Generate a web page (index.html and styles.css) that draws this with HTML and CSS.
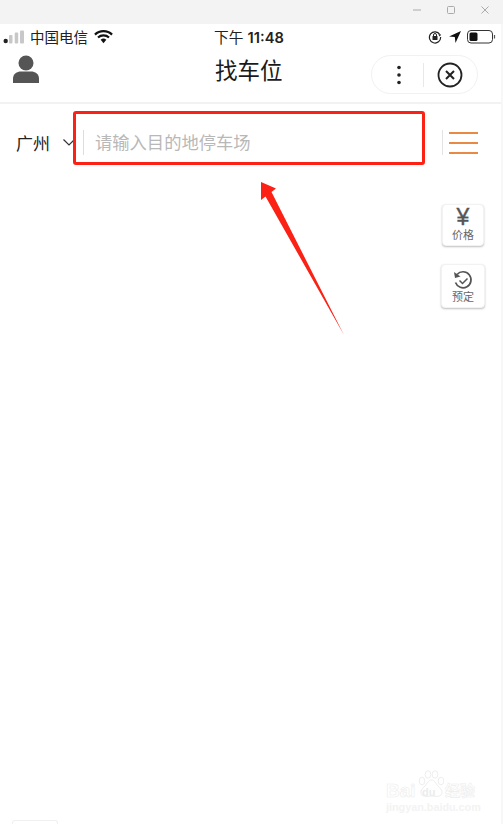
FILE: index.html
```html
<!DOCTYPE html>
<html lang="zh-CN">
<head>
    <meta charset="UTF-8">
    <meta name="viewport" content="width=device-width, initial-scale=1.0">
    <title>找车位</title>
    <link rel="stylesheet" href="styles.css">
</head>
<body>
    <div class="window">
        <div class="titlebar">
            <svg class="win-icon" viewBox="0 0 10 10"><path d="M1 5h8" stroke="#aaa" fill="none"/></svg>
            <svg class="win-icon" viewBox="0 0 10 10"><rect x="1.500" y="1.500" width="7" height="7" rx="1" stroke="#aaa" fill="none"/></svg>
            <svg class="win-icon" viewBox="0 0 10 10"><path d="M1.500 1.500l7 7M8.500 1.500l-7 7" stroke="#aaa" fill="none"/></svg>
        </div>

        <div class="statusbar">
            <div class="status-left">
                <svg class="signal" viewBox="0 0 22 16">
                    <circle cx="2.700" cy="12" r="2.200" fill="#222"/>
                    <rect x="6" y="6" width="3.500" height="8.500" rx="1" fill="#c8c8c8"/>
                    <rect x="11.700" y="3.500" width="3.500" height="11" rx="1" fill="#c8c8c8"/>
                    <rect x="17" y="1.500" width="4" height="13" rx="1" fill="#c8c8c8"/>
                </svg>
                <span class="carrier">中国电信</span>
                <svg class="wifi" viewBox="0 0 20 15">
                    <path d="M1 5.500a13 13 0 0 1 18 0" stroke="#111" stroke-width="2.400" fill="none"/>
                    <path d="M4.200 8.600a8.500 8.500 0 0 1 11.600 0" stroke="#111" stroke-width="2.300" fill="none"/>
                    <path d="M7 11a4.500 4.500 0 0 1 6 0l-3 3.500z" fill="#111"/>
                </svg>
            </div>
            <div class="clock">下午 <b>11:48</b></div>
            <div class="status-right">
                <svg class="lock" viewBox="0 0 14 14">
                    <path d="M11.800 4.500A5.600 5.600 0 1 0 12.600 7" stroke="#222" stroke-width="1.200" fill="none"/>
                    <path d="M10.200 4.400h3l-1.400 2z" fill="#222"/>
                    <rect x="4.500" y="6" width="5" height="4" rx=".5" fill="#222"/>
                    <path d="M5.500 6V5a1.500 1.500 0 0 1 3 0v1" stroke="#222" fill="none"/>
                </svg>
                <svg class="location" viewBox="0 0 12 12"><path d="M12 0L0 5.500l5.800.6.700 5.900z" fill="#111"/></svg>
                <svg class="battery" viewBox="0 0 30 14">
                    <rect x=".5" y=".5" width="25" height="12.500" rx="3.500" stroke="#333" fill="none"/>
                    <rect x="2.500" y="2.500" width="8" height="8.500" rx="1.500" fill="#111"/>
                    <path d="M27.500 5v3.500" stroke="#555" stroke-width="1.200"/>
                </svg>
            </div>
        </div>

        <div class="navbar">
            <svg class="avatar" viewBox="0 0 28 28">
                <circle cx="14" cy="8" r="7.500" fill="#555"/>
                <path d="M1 28v-4.500C1 19 5 16.500 9 16.500h10c4 0 8 2.500 8 7V28z" fill="#555"/>
            </svg>
            <h1 class="nav-title">找车位</h1>
            <div class="capsule">
                <svg class="more" viewBox="0 0 4 20">
                    <circle cx="2" cy="2.500" r="1.800" fill="#222"/>
                    <circle cx="2" cy="10" r="1.800" fill="#222"/>
                    <circle cx="2" cy="17.500" r="1.800" fill="#222"/>
                </svg>
                <span class="capsule-line"></span>
                <svg class="close" viewBox="0 0 26 26">
                    <circle cx="13" cy="13" r="11.500" stroke="#222" stroke-width="1.800" fill="none"/>
                    <path d="M9 9l8 8M17 9l-8 8" stroke="#222" stroke-width="2" fill="none"/>
                </svg>
            </div>
        </div>

        <div class="search-row">
            <span class="city">广州</span>
            <svg class="chevron" viewBox="0 0 12 7"><path d="M.5.5L6 6l5.500-5.500" stroke="#333" stroke-width="1.200" fill="none"/></svg>
            <span class="search-input">请输入目的地停车场</span>
            <div class="menu-btn">
                <span></span>
                <span></span>
                <span></span>
            </div>
        </div>

        <div class="map">
            <div class="map-tools">
                <div class="tool tool-price">
                    <span class="yen">¥</span>
                    <span class="tool-label">价格</span>
                </div>
                <div class="tool tool-book">
                    <svg class="history" viewBox="0 0 20 20">
                        <path d="M4 4.500A8 8 0 1 1 2.500 12.500" stroke="#555" stroke-width="1.700" fill="none"/>
                        <path d="M1 2l1 6 5.500-1.500z" fill="#555"/>
                        <path d="M6.500 10.500l3 3 5-5" stroke="#555" stroke-width="1.500" fill="none"/>
                    </svg>
                    <span class="tool-label">预定</span>
                </div>
            </div>
            <div class="watermark">
                <svg class="wm-paw" viewBox="0 0 26 28">
                    <ellipse cx="4" cy="11" rx="2.800" ry="3.800" stroke="#eeeeee" fill="#fff"/>
                    <ellipse cx="10" cy="4.500" rx="2.800" ry="3.800" stroke="#eeeeee" fill="#fff"/>
                    <ellipse cx="17" cy="4.500" rx="2.800" ry="3.800" stroke="#eeeeee" fill="#fff"/>
                    <ellipse cx="23" cy="11" rx="2.800" ry="3.800" stroke="#eeeeee" fill="#fff"/>
                    <path d="M13.500 10c-3 0-4 3-6.500 6-2.500 2.500-4.500 4-4 7 .6 3.500 5 4 10.500 3 5.500 1 10 .5 10.500-3 .5-3-1.500-4.500-4-7-2.500-3-3.500-6-6.500-6z" stroke="#eeeeee" fill="#fff"/>
                </svg>
                <div class="wm-logo">
                    <span class="wm-bai">Bai</span>
                    <span class="wm-du">du</span>
                    <span class="wm-jy">经验</span>
                </div>
                <div class="wm-url">jingyan.baidu.com</div>
            </div>
            <div class="bottom-tab"></div>
        </div>

        <!-- red marks drawn on top of the screenshot -->
        <div class="mark-box"></div>
        <svg class="mark-arrow" viewBox="0 0 90 160">
            <path d="M1 1L1 19L5.500 15.500L84 154L11.500 11L16 7.500z" fill="#fb2115"/>
        </svg>
    </div>
</body>
</html>
```

FILE: styles.css
```css
* {
    box-sizing: border-box;
}
html, body {
    margin: 0;
    height: 100%;
}
body {
    font-family: "Liberation Sans", "Noto Sans CJK SC", sans-serif;
    background: #fff;
    color: #111;
    overflow: hidden;
}
.window {
    position: relative;
    height: 824px;
    display: flex;
    flex-direction: column;
    border-right: 2px solid #f7f7f7;
}

/* windows title bar */
.titlebar {
    height: 24px;
    margin-right: -2px;
    background: #f3f3f3;
    display: flex;
    justify-content: flex-end;
    align-items: center;
    gap: 24px;
    padding-right: 13px;
    padding-bottom: 4px;
}
.win-icon {
    width: 10px;
    height: 10px;
}

/* phone status bar */
.statusbar {
    height: 25px;
    display: grid;
    grid-template-columns: 1fr auto 1fr;
    align-items: center;
}
.status-left {
    display: flex;
    align-items: center;
    padding-left: 3px;
}
.signal {
    width: 22px;
    height: 16px;
}
.carrier {
    font-size: 14.500px;
    margin-left: 5px;
    color: #222;
}
.wifi {
    width: 19px;
    height: 15px;
    margin-left: 6px;
}
.clock {
    font-size: 14.700px;
    color: #222;
    margin-left: -3px;
}
.clock b {
    font-family: "Inter", sans-serif;
    font-weight: 600;
}
.status-right {
    display: flex;
    align-items: center;
    justify-content: flex-end;
    padding-right: 4px;
}
.lock {
    width: 14px;
    height: 14px;
}
.location {
    width: 12px;
    height: 12px;
    margin-left: 7px;
}
.battery {
    width: 30px;
    height: 14px;
    margin-left: 6px;
}

/* nav bar */
.navbar {
    position: relative;
    height: 55px;
    display: flex;
    align-items: center;
    justify-content: space-between;
    padding: 0 23px 0 12px;
    border-bottom: 2px solid #f2f2f2;
}
.avatar {
    width: 28px;
    height: 28px;
    margin-bottom: 14px;
}
.nav-title {
    margin: 0 0 13px 0;
    font-size: 22.500px;
    font-weight: 400;
    position: absolute;
    left: 215px;
    color: #1a1a1a;
}
.capsule {
    width: 107px;
    height: 39px;
    margin-bottom: 2px;
    border: 1px solid #f1f1f1;
    border-radius: 20px;
    display: flex;
    align-items: center;
    padding-left: 25px;
}
.more {
    width: 4px;
    height: 20px;
}
.capsule-line {
    width: 1px;
    height: 24px;
    background: #e8e8e8;
    margin-left: 22px;
}
.close {
    width: 26px;
    height: 26px;
    margin-left: 13px;
}

/* search row */
.search-row {
    height: 78px;
    display: flex;
    align-items: center;
    padding: 0 0 1px 16px;
}
.city {
    font-size: 17px;
    color: #222;
}
.chevron {
    width: 12px;
    height: 7px;
    margin-left: 13px;
}
.search-input {
    flex: 1;
    margin-left: 8px;
    padding: 1px 0 0 11px;
    border-left: 1px solid #ddd;
    font-size: 17.300px;
    line-height: 24px;
    color: #b8b8b8;
}
.menu-btn {
    width: 36px;
    height: 25px;
    margin-right: 23px;
    padding-left: 6px;
    border-left: 1px solid #e3e3e3;
    display: flex;
    flex-direction: column;
    justify-content: space-between;
    padding-top: 2px;
    padding-bottom: 1px;
}
.menu-btn span {
    height: 2px;
    width: 29px;
    background: #e98a44;
}

/* map area with floating tools */
.map {
    position: relative;
    flex: 1;
}
.map-tools {
    position: absolute;
    top: 22px;
    right: 16px;
    display: flex;
    flex-direction: column;
    align-items: center;
    gap: 18px;
}
.tool {
    display: flex;
    flex-direction: column;
    align-items: center;
    background: #fff;
    border: 1px solid #f2f2f2;
    border-radius: 4px;
    box-shadow: 0 1px 2px rgba(0,0,0,0.25);
}
.tool-price {
    width: 42px;
    height: 42px;
    padding-top: 2px;
}
.tool-book {
    width: 44px;
    height: 44px;
    padding-top: 5px;
}
.yen {
    font-size: 23px;
    line-height: 21px;
    color: #555;
    -webkit-text-stroke: 0.4px #555;
}
.tool-label {
    font-size: 11px;
    line-height: 14px;
    color: #666;
}
.history {
    width: 20px;
    height: 20px;
}

/* baidu watermark */
.watermark {
    position: absolute;
    left: 386px;
    top: 588px;
    width: 90px;
    height: 42px;
    color: #fff;
}
.wm-paw {
    position: absolute;
    left: 32px;
    top: 0;
    width: 26px;
    height: 28px;
}
.wm-logo {
    position: absolute;
    left: 0;
    top: 12px;
    width: 90px;
    height: 18px;
    display: flex;
    align-items: center;
    font-weight: bold;
    -webkit-text-stroke: 0.6px #eeeeee;
}
.wm-bai {
    font-size: 19px;
    line-height: 18px;
    width: 36px;
}
.wm-du {
    font-size: 11px;
    line-height: 14px;
    width: 20px;
    padding-top: 2px;
    -webkit-text-stroke: 0;
    color: #ececec;
}
.wm-jy {
    font-size: 15px;
    line-height: 18px;
    margin-left: 3px;
    white-space: nowrap;
}
.wm-url {
    position: absolute;
    left: 0;
    bottom: 0;
    width: 90px;
    font-size: 10.800px;
    line-height: 10px;
    font-weight: bold;
    color: #f3f3f3;
    white-space: nowrap;
}
.bottom-tab {
    position: absolute;
    left: 12px;
    bottom: 0;
    width: 46px;
    height: 4px;
    border: 1px solid #f0f0f0;
    border-bottom: none;
    border-radius: 3px 3px 0 0;
}

/* annotation */
.mark-box {
    position: absolute;
    left: 73px;
    top: 111px;
    width: 352px;
    height: 54px;
    border: 3px solid #fb2115;
    border-radius: 3px;
}
.mark-arrow {
    position: absolute;
    left: 260px;
    top: 181px;
    width: 90px;
    height: 160px;
}
```
